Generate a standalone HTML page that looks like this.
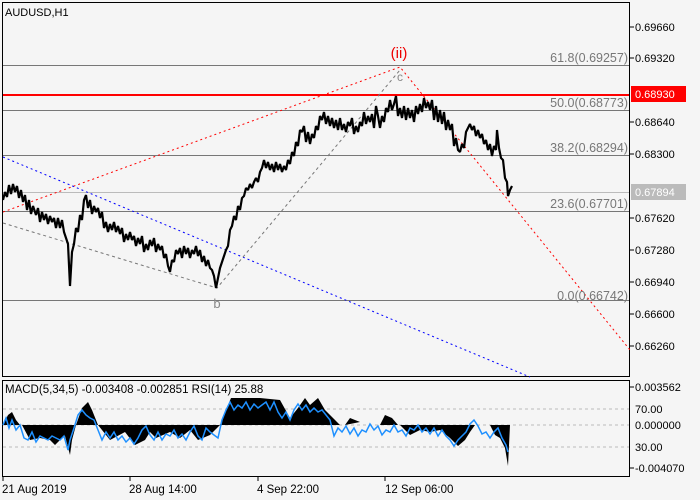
<!DOCTYPE html>
<html><head><style>
html,body{margin:0;padding:0;background:#f5f5f5;}
svg{display:block;font-family:"Liberation Sans",sans-serif;}
</style></head><body>
<svg width="700" height="500" viewBox="0 0 700 500" xmlns="http://www.w3.org/2000/svg">
<rect width="700" height="500" fill="#f5f5f5"/>
<rect x="2.5" y="2.5" width="627" height="374" fill="#f5f5f5" stroke="#000"/>
<g stroke="#777" stroke-width="1">
<line x1="3" y1="65.5" x2="629" y2="65.5"/>
<line x1="3" y1="110.5" x2="629" y2="110.5"/>
<line x1="3" y1="155.5" x2="629" y2="155.5"/>
<line x1="3" y1="211.5" x2="629" y2="211.5"/>
<line x1="3" y1="300.5" x2="629" y2="300.5"/>
</g>
<line x1="3" y1="192.5" x2="629" y2="192.5" stroke="#bbb"/>
<line x1="3" y1="95" x2="629" y2="95" stroke="#f00" stroke-width="2"/>
<polyline points="3,212 400,67 630,350" fill="none" stroke="#f00" stroke-dasharray="2,3"/>
<line x1="3" y1="157" x2="530" y2="377" stroke="#00f" stroke-dasharray="2,3"/>
<polyline points="3,223 217,288 400,70" fill="none" stroke="#777" stroke-dasharray="3,3"/>
<polyline fill="none" stroke="#000" stroke-width="2.2" stroke-linejoin="bevel" points="3,200 5,192 7,197 9,185 11,194 13,184 15,192 17,186 19,198 21,190 23,202 25,195 27,210 29,200 31,214 33,206 36,215 38,208 40,222 42,212 44,220 46,214 48,224 50,216 52,222 54,218 56,228 58,218 60,228 62,220 64,232 66,238 68,244 70,286 72,252 74,244 76,228 78,232 80,215 82,220 84,200 86,195 88,208 90,200 92,214 94,206 96,212 98,208 100,218 102,212 104,228 106,222 108,232 110,224 112,230 114,222 116,232 118,226 120,234 122,228 124,242 126,234 128,240 130,232 132,240 134,236 136,246 138,238 140,244 142,236 144,252 146,244 148,250 150,240 152,246 154,238 156,252 158,244 160,250 162,246 164,258 166,254 168,266 170,272 172,260 174,262 176,250 178,254 180,248 182,258 184,246 186,254 188,248 190,258 192,250 194,254 196,246 198,256 200,250 202,262 204,256 206,266 208,260 210,268 212,270 214,276 216,288 218,278 220,268 222,262 224,256 226,250 228,246 230,230 232,226 234,216 236,220 238,206 240,210 242,198 244,196 246,188 248,190 250,184 252,188 254,182 256,178 258,182 260,172 262,168 264,160 266,168 268,162 270,170 272,164 274,172 276,162 278,170 280,164 282,172 284,166 286,170 288,160 290,164 292,152 294,156 296,142 298,146 300,130 302,132 304,126 306,142 308,132 310,144 312,134 314,138 316,126 318,130 320,116 322,120 324,112 326,124 328,116 330,126 332,118 334,128 336,120 338,130 340,118 342,130 344,124 346,132 348,122 350,126 352,118 354,134 356,126 358,132 360,122 362,126 364,112 366,124 368,116 370,122 372,114 374,128 376,106 378,116 380,128 382,116 384,122 386,108 388,112 390,100 392,110 394,104 396,96 398,116 400,108 402,118 404,106 406,120 408,108 410,118 412,110 414,122 416,106 418,114 420,104 422,112 424,98 426,108 428,102 430,110 432,100 434,120 436,106 438,122 440,110 442,124 444,112 446,130 448,120 450,130 452,124 454,146 456,138 458,150 460,152 462,144 464,148 466,132 468,128 470,124 472,130 474,126 476,136 478,130 480,138 482,134 484,144 486,140 488,150 490,144 492,156 494,146 496,150 497,130 499,148 501,158 503,160 505,178 507,182 508,196 510,190 512,186"/>
<text x="5" y="16" font-size="11" fill="#000">AUDUSD,H1</text>
<text x="399" y="58" font-size="15" fill="#e00" text-anchor="middle">(ii)</text>
<text x="400" y="81" font-size="12" fill="#888" text-anchor="middle">c</text>
<text x="217" y="308" font-size="13" fill="#888" text-anchor="middle">b</text>
<g font-size="12.5" fill="#777" text-anchor="end">
<text x="628" y="62">61.8(0.69257)</text>
<text x="628" y="107">50.0(0.68773)</text>
<text x="628" y="152">38.2(0.68294)</text>
<text x="628" y="208">23.6(0.67701)</text>
<text x="628" y="300">0.0(0.66742)</text>
</g>
<g font-size="11" fill="#000">
<g stroke="#000"><line x1="630" y1="27" x2="634" y2="27"/><line x1="630" y1="58" x2="634" y2="58"/><line x1="630" y1="122" x2="634" y2="122"/><line x1="630" y1="154" x2="634" y2="154"/><line x1="630" y1="218" x2="634" y2="218"/><line x1="630" y1="250" x2="634" y2="250"/><line x1="630" y1="282" x2="634" y2="282"/><line x1="630" y1="314" x2="634" y2="314"/><line x1="630" y1="346" x2="634" y2="346"/></g>
<text x="635" y="31">0.69660</text>
<text x="635" y="62">0.69320</text>
<text x="635" y="126">0.68640</text>
<text x="635" y="158">0.68300</text>
<text x="635" y="222">0.67620</text>
<text x="635" y="254">0.67280</text>
<text x="635" y="286">0.66940</text>
<text x="635" y="318">0.66600</text>
<text x="635" y="350">0.66260</text>
</g>
<rect x="631" y="86" width="55" height="16" fill="#f00"/>
<text x="635" y="98" font-size="11" fill="#fff">0.68930</text>
<rect x="631" y="184" width="55" height="16" fill="#bbb"/>
<text x="635" y="196" font-size="11" fill="#fff">0.67894</text>
<rect x="2.5" y="380.5" width="627" height="96" fill="#f5f5f5" stroke="#000"/>
<g stroke="#bbb" stroke-dasharray="3,3">
<line x1="3" y1="409" x2="629" y2="409"/><line x1="3" y1="425" x2="629" y2="425"/><line x1="3" y1="447" x2="629" y2="447"/>
</g>
<path fill="#000" d="M3,425 L8,415 12,412 16,420 20,425 Z M22,425 L30,440 40,438 50,440 55,445 60,440 65,436 70,455 72,440 76,425 Z M76,425 L82,408 88,402 92,410 98,425 Z M98,425 L110,440 125,432 135,445 145,440 150,432 156,438 170,432 180,438 190,430 198,440 210,435 220,425 Z M220,425 L228,405 231,398 260,398 280,400 290,418 298,408 305,398 310,405 318,398 325,410 335,420 340,425 Z M345,425 L350,418 360,422 Z M380,425 L385,415 392,418 398,425 Z M400,425 L410,435 420,430 430,432 440,430 450,438 458,446 465,440 470,432 475,425 Z M480,425 L490,425 495,435 500,438 505,448 508,466 510,425 Z"/>
<polyline fill="none" stroke="#1e90ff" stroke-width="1.5" points="3,425 6,418 9,428 12,420 16,430 20,425 24,438 28,440 32,432 36,442 40,436 44,438 48,440 52,436 56,438 60,440 64,436 68,450 70,440 74,428 78,415 82,410 86,415 90,418 94,420 98,430 102,440 106,432 110,438 114,432 118,440 122,436 126,442 130,438 134,444 138,438 142,430 146,426 150,435 154,440 158,432 162,440 166,434 170,436 174,430 178,438 182,434 186,440 190,432 194,426 198,436 202,440 206,428 210,432 214,435 218,438 222,420 226,410 230,402 234,410 238,405 242,408 246,402 250,410 254,404 258,408 262,405 266,402 270,410 274,402 278,412 282,418 286,412 290,420 294,410 298,404 302,410 306,405 310,412 314,408 318,412 322,410 326,415 330,420 334,436 338,428 342,432 346,426 350,434 354,428 358,436 362,430 366,432 370,424 374,430 378,426 382,435 386,430 390,432 394,425 398,432 402,430 406,436 410,428 414,430 418,425 422,432 426,428 430,434 434,428 438,436 442,430 446,436 450,440 454,446 458,440 462,436 466,432 470,424 474,420 478,426 482,434 486,432 490,438 494,432 498,428 502,438 506,445 508,452"/>
<text x="5" y="393" font-size="11.5" fill="#000">MACD(5,34,5) -0.003408 -0.002851 RSI(14) 25.88</text>
<g font-size="11" fill="#000">
<text x="635" y="391">0.003562</text>
<text x="635" y="413">70.00</text>
<text x="635" y="429">0.000000</text>
<text x="635" y="451">30.00</text>
<text x="635" y="472">-0.004070</text>
</g>
<g stroke="#000"><line x1="630" y1="387" x2="634" y2="387"/><line x1="630" y1="468" x2="634" y2="468"/>
<line x1="3" y1="477" x2="3" y2="481"/><line x1="130" y1="477" x2="130" y2="481"/><line x1="258" y1="477" x2="258" y2="481"/><line x1="385" y1="477" x2="385" y2="481"/></g>
<g font-size="11.5" fill="#000">
<text x="2" y="493">21 Aug 2019</text>
<text x="129" y="493">28 Aug 14:00</text>
<text x="257" y="493">4 Sep 22:00</text>
<text x="385" y="493">12 Sep 06:00</text>
</g>
</svg>
</body></html>
